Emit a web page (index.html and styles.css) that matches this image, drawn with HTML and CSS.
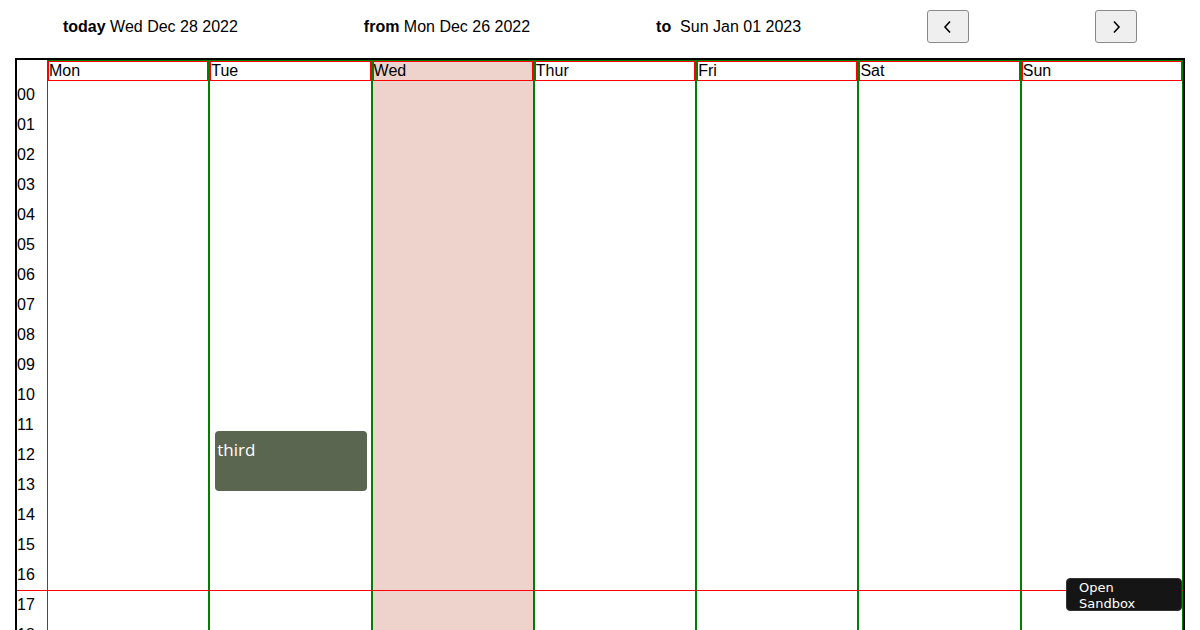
FILE: index.html
```html
<!DOCTYPE html>
<html>
<head>
<meta charset="utf-8">
<link rel="stylesheet" href="styles.css">
</head>
<body>
<div class="topbar">
  <div class="info"><b>today</b> Wed Dec 28 2022</div>
  <div class="info"><b>from</b> Mon Dec 26 2022</div>
  <div class="info"><b>to</b>&nbsp; Sun Jan 01 2023</div>
  <button class="nav"><svg width="10" height="14" viewBox="0 0 10 14"><polyline points="7,1.5 2,7 7,12.5" fill="none" stroke="#000" stroke-width="1.6"/></svg></button>
  <button class="nav"><svg width="10" height="14" viewBox="0 0 10 14"><polyline points="3,1.5 8,7 3,12.5" fill="none" stroke="#000" stroke-width="1.6"/></svg></button>
</div>
<div class="calendar">
  <div class="times">
    <div class="hour">00</div><div class="hour">01</div><div class="hour">02</div><div class="hour">03</div>
    <div class="hour">04</div><div class="hour">05</div><div class="hour">06</div><div class="hour">07</div>
    <div class="hour">08</div><div class="hour">09</div><div class="hour">10</div><div class="hour">11</div>
    <div class="hour">12</div><div class="hour">13</div><div class="hour">14</div><div class="hour">15</div>
    <div class="hour">16</div><div class="hour">17</div><div class="hour">18</div><div class="hour">19</div>
    <div class="hour">20</div><div class="hour">21</div><div class="hour">22</div><div class="hour">23</div>
  </div>
  <div class="day"><div class="dayhead">Mon</div></div>
  <div class="day"><div class="dayhead">Tue</div><div class="event">third</div></div>
  <div class="day today"><div class="dayhead">Wed</div></div>
  <div class="day"><div class="dayhead">Thur</div></div>
  <div class="day"><div class="dayhead">Fri</div></div>
  <div class="day"><div class="dayhead">Sat</div></div>
  <div class="day"><div class="dayhead">Sun</div></div>
  <div class="nowline"></div>
</div>
<a class="sandbox">Open<br>Sandbox</a>
</body>
</html>
```
FILE: styles.css
```css
html, body {
  margin: 0;
  padding: 0;
  background: #fff;
  overflow: hidden;
}
body {
  font-family: "Liberation Sans", Arial, sans-serif;
  font-size: 16px;
  color: #000;
  width: 1200px;
  height: 630px;
}
.topbar {
  display: flex;
  justify-content: space-around;
  align-items: center;
  height: 52px;
  padding-top: 1px;
  margin-bottom: 5px;
}
.info {
  white-space: nowrap;
}
.nav {
  width: 42px;
  height: 33px;
  margin-top: -1px;
  background: #efefef;
  border: 1px solid #8a8a8a;
  border-radius: 3px;
  padding: 0;
  display: flex;
  align-items: center;
  justify-content: center;
}
.calendar {
  position: relative;
  margin-left: 15px;
  width: 1166px;
  height: 700px;
  border: 2px solid #000;
  display: grid;
  grid-template-columns: 30px repeat(7, 1fr);
}
.times {
  padding-top: 26px;
}
.hour {
  height: 30px;
  line-height: 18px;
}
.day {
  position: relative;
  border-left: 1px solid #008000;
  border-right: 1px solid #008000;
  border-top: 1px solid #008000;
}
.day.today {
  background: #edd3cc;
}
.dayhead {
  height: 18px;
  line-height: 18px;
  border: 1px solid #f00;
}
.event {
  position: absolute;
  left: 5px;
  right: 4px;
  top: 370px;
  height: 60px;
  background: #5b6651;
  border-radius: 4px;
  color: #fff;
  font-family: "Open Sans", sans-serif;
  font-size: 17px;
  line-height: 22px;
  padding: 8px 0 0 2px;
  box-sizing: border-box;
}
.nowline {
  position: absolute;
  left: 0;
  right: 0;
  top: 530px;
  height: 1px;
  background: #f00;
}
.sandbox {
  position: absolute;
  left: 1066px;
  top: 578px;
  width: 116px;
  height: 33px;
  box-sizing: border-box;
  background: #151515;
  border-radius: 4px;
  color: #fff;
  font-family: "DejaVu Sans", sans-serif;
  font-size: 13px;
  line-height: 16px;
  padding: 1px 0 0 12px;
  border: 1px solid #333;
}
```
